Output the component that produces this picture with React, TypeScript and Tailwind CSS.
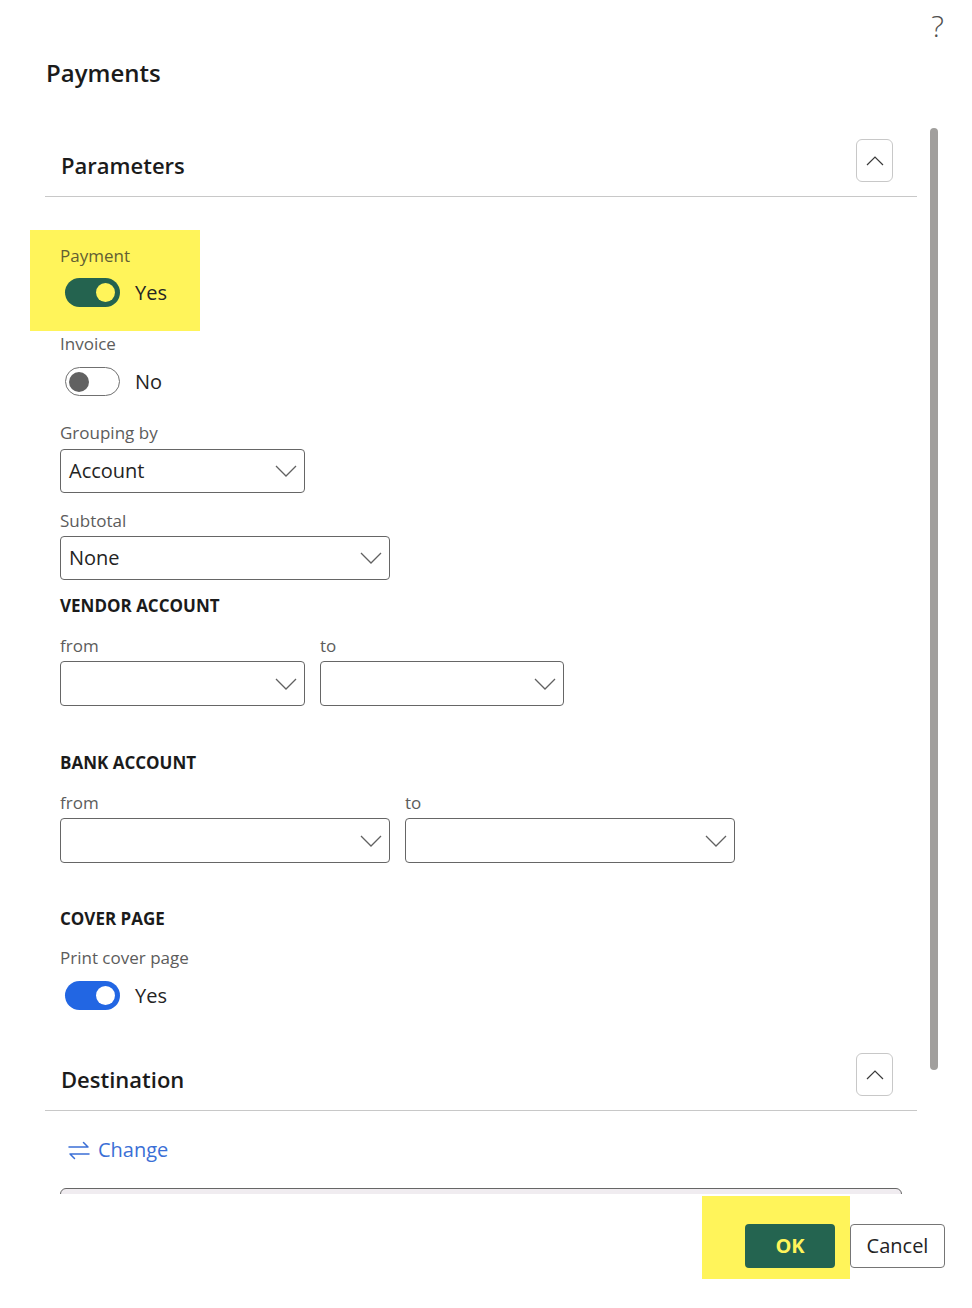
import React from "react";

const FONT = { fontFamily: '"Open Sans", "Noto Sans", "Liberation Sans", sans-serif' };

function Chevron() {
  return (
    <svg width="22" height="12" viewBox="0 0 22 12" fill="none">
      <polyline points="1,1 11,11 21,1" stroke="#616161" strokeWidth="1.3" />
    </svg>
  );
}

function Select({ w, h = "h-[44px]", value }: { w: string; h?: string; value?: string }) {
  return (
    <div className={`${w} ${h} border border-[#666666] rounded-[4px] flex items-center justify-between pl-[8px] pr-[7px] bg-white`}>
      <span className="text-[20px] text-[#242424] leading-[28px]">{value ?? ""}</span>
      <Chevron />
    </div>
  );
}

function Label({ children, className = "" }: { children: React.ReactNode; className?: string }) {
  return <div className={`text-[17px] leading-[22px] text-[#5c5c5c] ${className}`}>{children}</div>;
}

function Heading({ children, className = "" }: { children: React.ReactNode; className?: string }) {
  return <div className={`text-[17px] leading-[22px] font-bold text-[#1b1b1b] ${className}`}>{children}</div>;
}

function Toggle({ state, color, knob, text }: { state: boolean; color: string; knob: string; text: string }) {
  return (
    <div className="flex items-center ml-[5px] h-[29px]">
      {state ? (
        <div className={`w-[55px] h-[29px] rounded-full ${color} flex items-center justify-end pr-[5px]`}>
          <div className={`w-[19px] h-[19px] rounded-full ${knob}`} />
        </div>
      ) : (
        <div className="w-[55px] h-[29px] rounded-full border border-[#707070] flex items-center pl-[3px] bg-white">
          <div className="w-[20px] h-[20px] rounded-full bg-[#616161]" />
        </div>
      )}
      <span className="ml-[15px] text-[20px] leading-[28px] text-[#242424]">{text}</span>
    </div>
  );
}

function CollapseButton() {
  return (
    <div className="w-[37px] h-[43px] border border-[#c8c8c8] rounded-[6px] flex items-center justify-center bg-white mt-[11px] shrink-0">
      <svg width="18" height="10" viewBox="0 0 18 10" fill="none">
        <polyline points="1,9 9,1 17,9" stroke="#3a3a3a" strokeWidth="1.2" />
      </svg>
    </div>
  );
}

function SectionHeader({ title }: { title: string }) {
  return (
    <div className="h-[69px] border-b border-[#c8c8c8] flex items-start justify-between pl-[16px] pr-[24px]">
      <div className="mt-[23px] text-[22px] leading-[28px] text-[#1b1b1b] font-semibold">{title}</div>
      <CollapseButton />
    </div>
  );
}

export default function App() {
  return (
    <div className="w-[972px] h-[1308px] bg-white flex flex-col overflow-hidden" style={FONT}>
      {/* top */}
      <div className="h-[128px] flex flex-col shrink-0">
        <div className="h-[57px] flex justify-end pr-[28px] shrink-0">
          <span className="text-[30px] leading-[40px] font-light text-[#505050] mt-[6px]">?</span>
        </div>
        <div className="pl-[46px] text-[24px] leading-[32px] text-[#1b1b1b] font-semibold">Payments</div>
      </div>

      {/* scroll area */}
      <div className="h-[1066px] flex items-start shrink-0 overflow-hidden">
        <div className="ml-[45px] w-[872px] shrink-0">
          <SectionHeader title="Parameters" />

          <div className="flex flex-col pl-[15px]">
            <div className="mt-[33px] -ml-[30px] w-[170px] h-[101px] bg-[#fff45a] pl-[30px] pt-[15px]">
              <Label className="text-[#625e33]">Payment</Label>
              <div className="mt-[11px]">
                <Toggle state color="bg-[#24634f]" knob="bg-[#fff45a]" text="Yes" />
              </div>
            </div>

            <Label className="mt-[2px]">Invoice</Label>
            <div className="mt-[12px]">
              <Toggle state={false} color="" knob="" text="No" />
            </div>

            <Label className="mt-[26px]">Grouping by</Label>
            <div className="mt-[5px]">
              <Select w="w-[245px]" value="Account" />
            </div>

            <Label className="mt-[17px]">Subtotal</Label>
            <div className="mt-[4px]">
              <Select w="w-[330px]" value="None" />
            </div>

            <Heading className="mt-[15px]">VENDOR ACCOUNT</Heading>
            <div className="mt-[18px] flex gap-[15px]">
              <div className="flex flex-col">
                <Label>from</Label>
                <div className="mt-[4px]"><Select w="w-[245px]" h="h-[45px]" /></div>
              </div>
              <div className="flex flex-col">
                <Label>to</Label>
                <div className="mt-[4px]"><Select w="w-[244px]" h="h-[45px]" /></div>
              </div>
            </div>

            <Heading className="mt-[46px]">BANK ACCOUNT</Heading>
            <div className="mt-[18px] flex gap-[15px]">
              <div className="flex flex-col">
                <Label>from</Label>
                <div className="mt-[4px]"><Select w="w-[330px]" h="h-[45px]" /></div>
              </div>
              <div className="flex flex-col">
                <Label>to</Label>
                <div className="mt-[4px]"><Select w="w-[330px]" h="h-[45px]" /></div>
              </div>
            </div>

            <Heading className="mt-[45px]">COVER PAGE</Heading>
            <Label className="mt-[17px]">Print cover page</Label>
            <div className="mt-[12px]">
              <Toggle state color="bg-[#2266e3]" knob="bg-white" text="Yes" />
            </div>
          </div>

          <div className="mt-[32px]">
            <SectionHeader title="Destination" />
          </div>

          <div className="pl-[22px] mt-[25px] flex items-center h-[28px]">
            <svg width="24" height="20" viewBox="0 0 24 20" fill="none" className="mr-[7px]">
              <path d="M2 7 H21 M21 7 L16.5 2.5" stroke="#3b6fd6" strokeWidth="1.5" strokeLinecap="round" />
              <path d="M22 14 H3 M3 14 L7.5 18.5" stroke="#3b6fd6" strokeWidth="1.5" strokeLinecap="round" />
            </svg>
            <span className="text-[20px] leading-[28px] text-[#3b6fd6]">Change</span>
          </div>

          <div className="ml-[15px] mt-[24px] w-[842px] h-[120px] border border-[#666666] rounded-t-[6px] bg-[#f0ecf0]" />
        </div>

        <div className="ml-[13px] w-[8px] h-[942px] rounded-full bg-[#a19f9d] shrink-0" />
      </div>

      {/* footer */}
      <div className="flex-1 flex justify-end items-start pr-[27px] bg-white">
        <div className="mt-[2px] w-[148px] h-[83px] bg-[#fff45a] flex justify-end items-start pr-[15px] pt-[28px]">
          <div className="w-[90px] h-[44px] rounded-[4px] bg-[#246450] flex items-center justify-center text-[20px] font-bold text-[#fff45a]">
            OK
          </div>
        </div>
        <div className="mt-[30px] w-[95px] h-[44px] rounded-[4px] border border-[#757575] bg-white flex items-center justify-center text-[20px] text-[#242424]">
          Cancel
        </div>
      </div>
    </div>
  );
}
